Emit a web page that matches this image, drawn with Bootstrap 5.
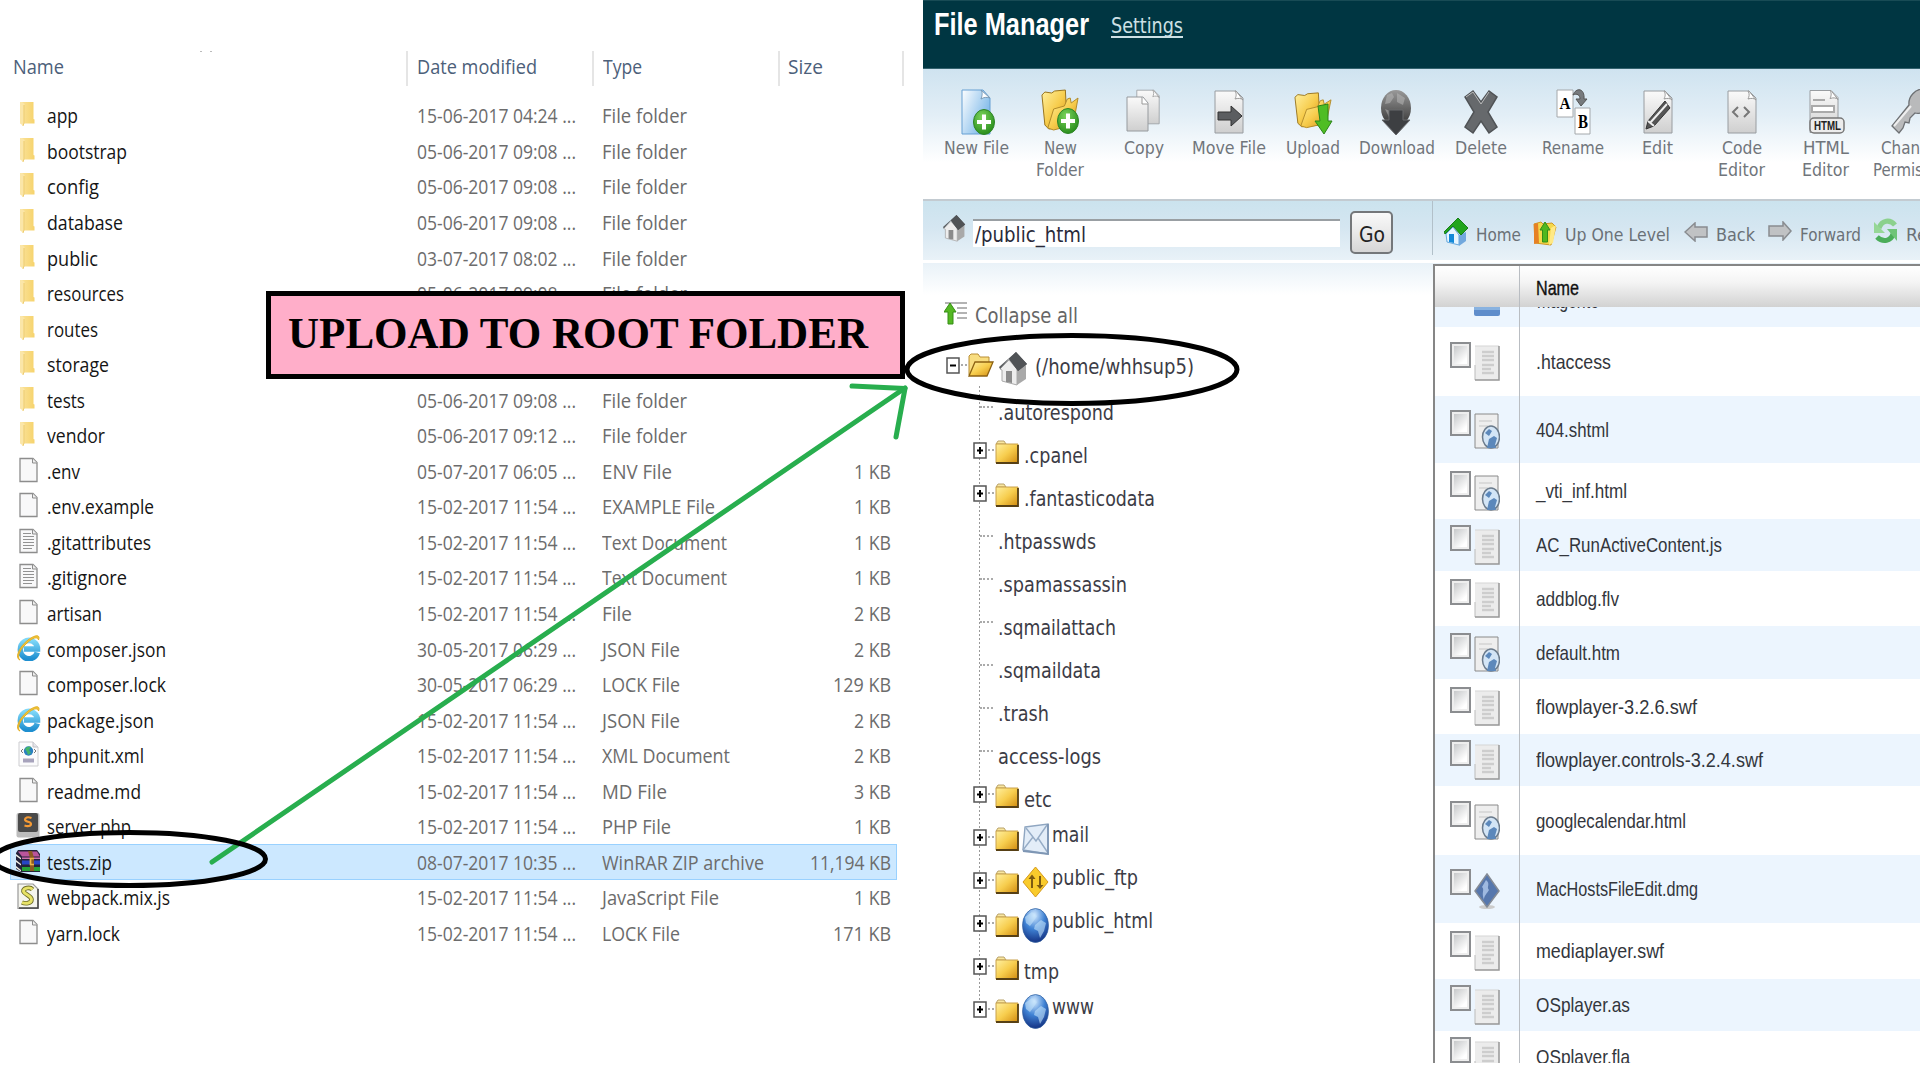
<!DOCTYPE html>
<html lang="en">
<head>
<meta charset="utf-8">
<title>Upload to root folder</title>
<link href="https://cdn.jsdelivr.net/npm/bootstrap@5.3.0/dist/css/bootstrap.min.css" rel="stylesheet">
<style>
body{width:1920px;height:1080px;overflow:hidden;background:#fff}
svg{display:block;flex:none}
[data-w]{display:inline-block;white-space:nowrap;transform-origin:0 50%}
/* explorer */
.explorer{width:923px;height:1080px;font:20px/24px "Open Sans","Noto Sans",sans-serif;color:#6c6c6c}
.ex-head{height:37px;margin-top:51px;color:#4c607a;line-height:31px}
.ex-head>div{border-right:2px solid #e5e5e5;height:35px}
.ex-list{padding-top:9.6px}
.ex-row{height:35.55px;margin-left:10px;width:887px;border:1px solid transparent}
.ex-row.picked{background:#cce8ff;border-color:#99d1ff}
.ex-icon{width:36px;padding-left:4px;padding-bottom:2px}
.ex-name{width:370px;color:#151515;padding-top:2px}
.ex-date{width:185px;padding-top:2px}.ex-type{width:150px;padding-top:2px}.ex-size{width:139px;padding-top:2px}
.sort-dots{height:1px;left:200px;top:51px;width:12px;border-left:2px solid #bbb;border-right:2px solid #bbb}
/* file manager */
.manager{width:997px;height:1063px;font-family:"DejaVu Sans Condensed","DejaVu Sans",sans-serif;color:#555}
.mg-top{height:69px;background:#003642;border-top:1px solid #184b55;border-bottom:1px solid #33626e}
.mg-title{font:bold 31px/36px "Liberation Sans",Arial,sans-serif;color:#fff;margin:6px 22px 0 11px}
.mg-settings{font-size:20.5px;line-height:28px;color:#cde0e5;margin-top:11px;text-decoration:underline;text-underline-offset:3px;text-decoration-skip-ink:none}
.mg-tools{height:130px;padding:19px 0 0 11px;background:linear-gradient(#cfe3f0,#e2eef6 35%,#fff 72%);font-size:18px;line-height:22px;color:#70757b}
.tool{width:84.2px;flex:none}
.tool svg{margin-bottom:1px}
.tool:last-child div+div{margin-left:14px}
.tool-sep{width:1px;height:68px;background:#b9c3ca;margin-right:8px}
.mg-bar{height:61px;border-top:2px solid #c3cbd1;background:linear-gradient(#cbe3ee,#d5e6f1 45%,#e9f2f8)}
.mg-path{width:510px;height:54px;border-right:1px solid #b2c0c9;padding-left:20px}
.mg-input{width:367px;height:28px;background:#fff;border-top:2px solid #999fa3;font-size:22px;line-height:28px;color:#2a2a3a;padding-left:2px;margin:9px 10px 0 7px}
.mg-go{width:43px;height:43px;border:2px solid #74777a;border-radius:5px;background:linear-gradient(#f9f9f9,#e9e9e9 50%,#d6d6d6);color:#222;font-size:22px;line-height:24px;padding:5px 0 0;margin-top:8px}
.mg-nav{font-size:18px;line-height:24px;color:#6a7177;padding:9px 0 0 11px;margin-top:7px}
.mg-nav span{flex:none;margin-top:6px}
.mg-main{height:803px;border-top:3px solid #fff;background:linear-gradient(#e9f2f8,#fff 32px)}
.mg-tree{width:510px;font-size:22px;line-height:28px;color:#3c3c46;padding-top:37px}
.tree-all{padding-left:21px;height:28px;color:#666}
.tree-root{padding-left:23px;height:52px;margin-top:11px}
.tree-list{padding-left:50px;background:repeating-linear-gradient(#999 0 2px,#fff0 2px 4px) 56px 0/1px 622px no-repeat;margin-top:-5px}
.tree-row{height:42.98px}
.dots{height:0;border-top:2px dotted #aaa}
.raised{margin-bottom:4px}.lowered{margin-top:12px}
.mg-files{width:487px;border:2px solid #868686;border-width:2px 0 0 2px;margin-top:1px;overflow:hidden;font:21px/26px "Liberation Sans",Arial,sans-serif;color:#33363c}
.file-head{height:41px;background:linear-gradient(#fff,#f4f4f4 40%,#d2d2d2);color:#111;-webkit-text-stroke:.4px #111}
.file-row{background:#fff}.file-row:nth-child(even){background:#ecf5fe}
.file-pick{width:85px;border-right:1.5px solid #b9bdc2;align-self:stretch;padding-left:15px}
.file-name{padding:0 0 0 16px}
.file-head .file-name{padding-top:2px}
.tick{width:21px;height:26px;border:2px solid #8b8d90;background:linear-gradient(135deg,#bdbfc1,#fff 75%);box-shadow:inset 0 0 0 2px #eee;margin:-14px 3px 0 0}
/* annotations */
.banner{left:266px;top:291px;width:639px;height:88px;border:5px solid #000;background:#ffaec9;z-index:3;color:#000;font:bold 44.5px/50px "Liberation Serif",serif;padding:11.5px 0 0 17px}
.marks{left:0;top:0;z-index:4;pointer-events:none}
</style>
<script src="https://cdn.jsdelivr.net/npm/bootstrap@5.3.0/dist/js/bootstrap.bundle.min.js"></script>
</head>
<body class="d-flex position-relative">
<svg width="0" height="0" class="position-absolute">
<defs>
<linearGradient id="gy" x1="0" y1="0" x2="1" y2="1"><stop offset="0" stop-color="#fff0a0"/><stop offset=".5" stop-color="#f7cd4d"/><stop offset="1" stop-color="#d18b10"/></linearGradient>
<linearGradient id="gp" x1="0" y1="0" x2="0" y2="1"><stop offset="0" stop-color="#fafafa"/><stop offset="1" stop-color="#cfcfcf"/></linearGradient>
<linearGradient id="gb" x1="0" y1="0" x2="1" y2=".6"><stop offset="0" stop-color="#fdfeff"/><stop offset="1" stop-color="#78b6e8"/></linearGradient>
<linearGradient id="gk" x1="0" y1="0" x2="0" y2="1"><stop offset="0" stop-color="#999"/><stop offset="1" stop-color="#333"/></linearGradient>
<linearGradient id="gf" x1="0" y1="0" x2="1" y2="0"><stop offset="0" stop-color="#fbe39c"/><stop offset="1" stop-color="#f6d36c"/></linearGradient>
<radialGradient id="gg" cx=".45" cy=".2" r=".9"><stop offset="0" stop-color="#d5ebff"/><stop offset=".45" stop-color="#3f82d4"/><stop offset="1" stop-color="#0a1f70"/></radialGradient>
<radialGradient id="gn" cx=".4" cy=".3" r=".7"><stop offset="0" stop-color="#7bd45c"/><stop offset="1" stop-color="#2b8f1d"/></radialGradient>
<linearGradient id="ge" x1="0" y1="0" x2="0" y2="1"><stop offset="0" stop-color="#7fd8f8"/><stop offset="1" stop-color="#1f8fd0"/></linearGradient>

<symbol id="e-folder" viewBox="0 0 26 26"><path d="M5 1h13.500v17l1 .5v4H5z" fill="url(#gf)"/><path d="M5 1h2l2.500 2v19l-1.500 3L5 22z" fill="#fbe6a8"/><path d="M9 4v18l-1 3" stroke="#eac45d" fill="none" stroke-width=".8"/></symbol>
<symbol id="e-file" viewBox="0 0 26 26"><path d="M5 1.500h13l4 4V24.500H5z" fill="#f8f8f9" stroke="#8d8d8d" stroke-width="1.300"/><path d="M17.500 1.500v4.500H22" fill="#eee" stroke="#8d8d8d"/></symbol>
<symbol id="e-text" viewBox="0 0 26 26"><use href="#e-file"/><path d="M8 5.500h8M8 8.500h11M8 11.500h11M8 14.500h11M8 17.500h11M8 20.500h9" stroke="#929292" stroke-width="1.100"/></symbol>
<symbol id="e-ie" viewBox="0 0 26 26"><path d="M22.300 17.500A8.700 9.200 0 1 1 22.500 12.500v1.500H9" fill="none" stroke="url(#ge)" stroke-width="5.500"/><path d="M5 25C-1 23 5 11 13 5C18 1 26-2 23.500 5C23 1 17 3 12 8C6 13 1 22 5 25z" fill="#f1c63a" stroke="#e3ae22" stroke-width="1"/></symbol>
<symbol id="e-xml" viewBox="0 0 26 26"><path d="M4 1h14l5 5v19H4z" fill="#fbfbfc" stroke="#cdcdd0"/><path d="M18 1v5h5" fill="#e5e5ea" stroke="#c2c2c8"/><circle cx="13.500" cy="10" r="4.700" fill="#2b80c0"/><path d="M10 8c2-3 5-3 6-2l-2 3 2 3-3 2-1-3z" fill="#44b569"/><path d="M8 8l-2 2 2 2M19 8l2 2-2 2" stroke="#777" fill="none"/><path d="M8 17.500h11v4H8z" fill="#a7a3bc"/></symbol>
<symbol id="e-php" viewBox="0 0 26 26"><rect x="1.500" y="1" width="23" height="24.500" rx="2" fill="#bcbcbc"/><rect x="3" y="1" width="20" height="19" rx="2" fill="#4a4a4a"/><path d="M16.500 6c-4-1.500-6.500-.5-6.500 1.500 0 3 6 1.500 6 4.500 0 2.300-3.500 2.500-6.500 1.500" fill="none" stroke="#f59a34" stroke-width="2.200"/></symbol>
<symbol id="e-rar" viewBox="0 0 26 26"><path d="M1 5l2-3h19l3 4v18H6L1 21z" fill="#24223a"/><path d="M3 3.500h19l3 5H7z" fill="#b9559b"/><path d="M7 9.500h18v1.500H7z" fill="#d06fb0"/><path d="M7 12.500h18v4H7z" fill="#2746c4"/><path d="M7 19h18v4H7z" fill="#26a136"/><path d="M1 6l5 4v1.500L1 8M1 12l5 4v1.500l-5-3.500M1 18l5 4v1.500l-5-3.500" fill="#f4f0e4"/><path d="M13 3h4l2 7v13h-4V10z" fill="#8b5a22"/><path d="M19 10.500h-3.500v6H19" fill="none" stroke="#e9b448" stroke-width="1.700"/></symbol>
<symbol id="e-js" viewBox="0 0 26 26"><path d="M3 1h15l5 5v19.500H3z" fill="#f5f5ee" stroke="#999" stroke-width="1.200"/><path d="M23 6v19H4" fill="none" stroke="#444" stroke-width="1.500"/><path d="M17.500 6.500C15 3.500 8 5 8.500 8.500c1 3 8 4 8 8 0 4-6 4.500-9.500 3" fill="none" stroke="#6d6c28" stroke-width="4.600"/><path d="M17.500 6.500C15 3.500 8 5 8.500 8.500c1 3 8 4 8 8 0 4-6 4.500-9.500 3" fill="none" stroke="#e7e267" stroke-width="2.900"/></symbol>

<symbol id="plus" viewBox="0 0 22 26"><ellipse cx="11" cy="13" rx="10.500" ry="12.500" fill="url(#gn)" stroke="#2d8425"/><path d="M11 5.500v15M4 13h14" stroke="#fff" stroke-width="4"/></symbol>
<symbol id="bigfolder" viewBox="0 0 40 46" preserveAspectRatio="none"><path d="M2 6l3-3 7 1 3-2 11-1 2 37-19 2-4-4z" fill="url(#gy)" stroke="#97731c"/><path d="M8 39l6-19 11-3 3-7 3-1 1 5 7-5-5 27-20 5z" fill="url(#gy)" stroke="#b18a29"/></symbol>
<symbol id="page" viewBox="0 0 30 44"><path d="M1 1h21l7 7v35H1z" fill="url(#gp)" stroke="#989ca0"/><path d="M21 1c2 3 1 6 0 8 3-1 6-1 8 1L22 1z" fill="#fff" stroke="#999"/></symbol>
<symbol id="t-newfile" viewBox="0 0 40 46"><path d="M6 1h21l7 8v36H6z" fill="url(#gb)" stroke="#67a0d3"/><path d="M25 1c2 3 1 6 0 9 3-2 6-2 9-1z" fill="#fff" stroke="#7a9ab6"/><use href="#plus" x="17" y="20" width="22" height="26"/></symbol>
<symbol id="t-newfolder" viewBox="0 0 40 46"><use href="#bigfolder" width="39" height="46"/><use href="#plus" x="17" y="19" width="22" height="26"/></symbol>
<symbol id="t-copy" viewBox="0 0 40 46"><use href="#page" x="12" y="0" width="24" height="36"/><path d="M3 8h16l5 6v28H3z" fill="url(#gp)" stroke="#969a9e"/><path d="M18 8v7h6" fill="#fff" stroke="#999"/></symbol>
<symbol id="t-move" viewBox="0 0 40 46"><use href="#page" x="5" y="1" width="30" height="44"/><path d="M9 23h13v-6l11 10-11 10v-6H9z" fill="#5b5d60" stroke="#333"/></symbol>
<symbol id="t-upload" viewBox="0 0 40 46"><use href="#bigfolder" y="3" width="39" height="40"/><path d="M25 17l10-2v17h4l-8 13-9-13h5z" fill="#4fbd24" stroke="#2c851a"/></symbol>
<symbol id="t-download" viewBox="0 0 40 46"><ellipse cx="19" cy="19" rx="15" ry="18" fill="url(#gk)"/><path d="M10 6l5-2 2 4-4 6-5 1zM20 4l8 5-2 7-6-3zM8 20l5 2-1 6z" fill="#b7b7b7" opacity=".55"/><path d="M12 21h14v10h7L19 46 5 31h7z" fill="#3d3f42" stroke="#686a6d"/></symbol>
<symbol id="t-delete" viewBox="0 0 40 46"><path d="M4 8l8-6 8 11 8-11 8 6-9 15 9 15-8 6-8-12-8 12-8-6 9-15z" fill="#66696c" stroke="#505356" stroke-width="1.500"/><path d="M5 8l7-5 8 12 8-12" stroke="#bbb" fill="none"/></symbol>
<symbol id="t-rename" viewBox="0 0 40 46"><path d="M4 1h16v27H4zM22 19h15v26H22z" fill="#fff" stroke="#a4a8ab"/><path d="M20 6c3-8 12-7 11 4h3l-6 7-5-7h4c0-4-3-6-7-4z" fill="#777a7d" stroke="#555"/><text x="6.500" y="20" font-family="Liberation Serif" font-weight="bold" font-size="17" textLength="11" lengthAdjust="spacingAndGlyphs">A</text><text x="25" y="39" font-family="Liberation Serif" font-weight="bold" font-size="19" textLength="10" lengthAdjust="spacingAndGlyphs">B</text></symbol>
<symbol id="t-edit" viewBox="0 0 40 46"><use href="#page" x="5" y="1" width="30" height="44"/><path d="M10 32L27 12l5 7-16 18-8 3z" fill="#555" stroke="#333"/><path d="M12 34L29 15M10 32l6 5" stroke="#eee" stroke-width="2"/></symbol>
<symbol id="t-code" viewBox="0 0 40 46"><use href="#page" x="5" y="1" width="30" height="44"/><path d="M16 18l-5 5 5 5M22 18l5 5-5 5" fill="none" stroke="#777" stroke-width="2"/></symbol>
<symbol id="t-html" viewBox="0 0 40 46"><use href="#page" x="3" y="0" width="30" height="45"/><path d="M7 11h12M6 17h22v6H6z" fill="#fff" stroke="#aaa" stroke-width="2"/><rect x="4" y="29" width="34" height="15" rx="4" fill="#ececec" stroke="#777" stroke-width="1.500"/><text x="8" y="41" font-family="Liberation Sans" font-weight="bold" font-size="12" fill="#222" textLength="27" lengthAdjust="spacingAndGlyphs">HTML</text></symbol>
<symbol id="t-key" viewBox="0 0 40 46"><path d="M2 37l17-21c-1-8 6-16 14-16 6 0 8 7 7 12-1 8-8 14-15 12l-5 5-1 5-4-1-2 6-4 5z" fill="#b9babb" stroke="#6e7174" stroke-width="1.300"/><path d="M4 37l17-20" stroke="#eee" stroke-width="2"/></symbol>

<symbol id="house" viewBox="0 0 29 34"><path d="M1 17L10 8l8 9v16L3 29V18z" fill="#ededed" stroke="#aaa"/><path d="M18 17l9-4v14l-9 6z" fill="#a9a9a9"/><path d="M17 0L28 12l-9 7L10 7 1 17l-1-2z" fill="#5a5d60"/><path d="M17 0L28 12l-9 7-9-12z" fill="#505356"/><path d="M7 19h6v12l-6-1z" fill="#8b8b8b"/></symbol>
<symbol id="home" viewBox="0 0 24 28"><path d="M2 16l7-7 6 8v10L3 24z" fill="#e7f5ff" stroke="#65a8dd"/><path d="M15 17l7-3v9l-7 5z" fill="#72a8dd"/><path d="M14 0l10 10-7 7-8-9-8 8-1-2z" fill="#21a51d" stroke="#197e18"/><path d="M5 16h5v9l-5-1z" fill="#1589d8"/></symbol>
<symbol id="up" viewBox="0 0 24 26"><path d="M1 4l7-2 2 2 9-1 4 4-5 18L2 23z" fill="#f5d84a" stroke="#d09624"/><path d="M1 4l4-1 1 20-5 1z" fill="#e68125"/><path d="M18 8l5-3-3 18-4 2z" fill="#ffe985"/><path d="M12 2l5 8h-2.500v12h-5V10H7z" fill="#50b71e" stroke="#328d18"/></symbol>
<symbol id="left" viewBox="0 0 24 20"><path d="M1 10L11 1v4h12v10H11v4z" fill="#c0c2c4" stroke="#898c90" stroke-width="1.500"/></symbol>
<symbol id="right" viewBox="0 0 24 20"><path d="M23 10L15 1v4H1v10h14v4z" fill="#c0c2c4" stroke="#898c90" stroke-width="1.500"/></symbol>
<symbol id="reload" viewBox="0 0 24 26"><path d="M5 10C8 2 16 1 21 7" fill="none" stroke="#8bd18d" stroke-width="5"/><path d="M0 4v11h11z" fill="#96d796"/><path d="M19 16c-2 7-10 9-16 3" fill="none" stroke="#4bad5a" stroke-width="5"/><path d="M23 23V11H13z" fill="#6fc478"/></symbol>
<symbol id="collapse" viewBox="0 0 24 24"><path d="M1 1h22M13 6h10M13 11h10M13 16h10" stroke="#9a9a9a" stroke-width="1.500"/><path d="M6 1l6 9H9v12H4V10H0z" fill="#54b823" stroke="#358d14"/></symbol>
<symbol id="folder" viewBox="0 0 24 24"><path d="M1 4l2-3h6l2 3z" fill="#f9e7a0" stroke="#b9a26a"/><path d="M1 4h22v19H1z" fill="url(#gy)" stroke="#c8a04a"/><path d="M1 23h22V5" fill="none" stroke="#574015" stroke-width="1.800"/></symbol>
<symbol id="openfolder" viewBox="0 0 26 24"><path d="M1 22V3l2-2h7l2 3h9v7" fill="#f8dd80" stroke="#b98e35"/><path d="M1 23L7 9h18l-6 14z" fill="url(#gy)" stroke="#8d6212" stroke-width="1.300"/></symbol>
<symbol id="mail" viewBox="0 0 27 32"><path d="M3 4l23-3v30L1 27z" fill="#e3edf8" stroke="#8fa6c1" stroke-width="1.400"/><path d="M4 5l10 13L25 2M1 27l10-13M26 30L16 15" fill="none" stroke="#96acc6" stroke-width="1.400"/><path d="M26 1v30L1 28" fill="none" stroke="#7e96b4" stroke-width="1.800"/></symbol>
<symbol id="ftp" viewBox="0 0 27 32"><path d="M13.500 1L26 16 13.500 31 1 16z" fill="#f9cb2c" stroke="#d59a1b"/><path d="M10 22V11M18 10v11" stroke="#7c5b12" stroke-width="2"/><path d="M6.500 13L10 8.500l3.500 4.500zM14.500 19l3.500 4 3.500-4z" fill="#7c5b12"/></symbol>
<symbol id="globe" viewBox="0 0 27 35"><ellipse cx="13.500" cy="17.500" rx="13" ry="17" fill="url(#gg)" stroke="#2e5f9f" stroke-width=".7"/><path d="M3 9l7-5 5 4-4 6-3 4-4-3zM13 17l6-5 5 3-2 8-4 7-2-7-4-2z" fill="#c3e2fa" opacity=".6"/></symbol>
<symbol id="f-doc" viewBox="0 0 26 36"><path d="M1 1h24v34H1z" fill="#ececec"/><path d="M1 1h24" stroke="#d5d5d5"/><path d="M1 20v15" stroke="#bbb"/><path d="M25 1v34H1" fill="none" stroke="#979797" stroke-width="1.500"/><path d="M8 7h12M8 11h12M8 15h12M8 20h12M8 24h9M8 28h12" stroke="#cdcdcd" stroke-width="2.500"/></symbol>
<symbol id="f-web" viewBox="0 0 26 36"><path d="M1 1h23v34H1z" fill="#eee" stroke="#8a8a8a"/><path d="M5 8h13M5 13h9" stroke="#dadada" stroke-width="2"/><ellipse cx="17" cy="24" rx="8.500" ry="11" fill="#d3e5f6" stroke="#6b7b8c" stroke-width="1.500"/><path d="M11 20l4-4 3 2-3 5zM15 26l5-3 3 2-2 7 1 3h-9z" fill="#5c88bb"/></symbol>
<symbol id="f-dmg" viewBox="0 0 26 36"><ellipse cx="13" cy="34" rx="8" ry="2" fill="#ccc"/><path d="M13 1l12 17-12 16L1 18z" fill="#5677ad" stroke="#858b95" stroke-width="1.500"/><path d="M12 7c5 4 0 7 3 10-2 4-5 5-5 10-3-8 1-10-2-13z" fill="#9fb9e0"/></symbol>
</defs></svg>

<section class="explorer flex-shrink-0 position-relative">
  <div class="sort-dots position-absolute"></div>
  <div class="ex-head d-flex">
    <div style="width:408px;padding-left:13px"><span data-w="51">Name</span></div>
    <div style="width:186px;padding-left:9px"><span data-w="120">Date modified</span></div>
    <div style="width:186px;padding-left:9px"><span data-w="39">Type</span></div>
    <div style="width:124px;padding-left:8px"><span data-w="35">Size</span></div>
  </div>
  <div class="ex-list" id="exList"></div>
</section>

<section class="manager overflow-hidden">
  <header class="mg-top d-flex align-items-start">
    <span class="mg-title" data-w="155">File Manager</span>
    <a class="mg-settings" data-w="72">Settings</a>
  </header>
  <div class="mg-tools d-flex overflow-hidden" id="tools"></div>
  <div class="mg-bar d-flex align-items-start overflow-hidden">
    <div class="mg-path d-flex align-items-center flex-shrink-0">
      <svg width="23" height="27"><use href="#house"/></svg>
      <div class="mg-input"><span data-w="111">/public_html</span></div>
      <button class="mg-go"><span data-w="26">Go</span></button>
    </div>
    <nav class="mg-nav d-flex align-items-center flex-fill">
      <svg width="24" height="28" class="me-2"><use href="#home"/></svg><span data-w="45">Home</span>
      <svg width="24" height="26" style="margin:1px 8px 0 12px"><use href="#up"/></svg><span data-w="105">Up One Level</span>
      <svg width="24" height="20" style="margin:0 8px 1px 14px"><use href="#left"/></svg><span data-w="39">Back</span>
      <svg width="24" height="20" style="margin:0 8px 3px 13px"><use href="#right"/></svg><span data-w="61">Forward</span>
      <svg width="24" height="26" style="margin:0 8px 2px 13px"><use href="#reload"/></svg><span data-w="58">Reload</span>
    </nav>
  </div>
  <div class="mg-main d-flex align-items-start overflow-hidden">
    <div class="mg-tree flex-shrink-0">
      <div class="tree-all d-flex align-items-center"><svg width="24" height="24"><use href="#collapse"/></svg><span style="margin:3px 0 0 7px" data-w="103">Collapse all</span></div>
      <div class="tree-root d-flex align-items-center">
        <svg width="14" height="17" viewBox="0 0 14 17"><path d="M1 1h12v15H1z" fill="#fff" stroke="#555" stroke-width="1.500"/><path d="M4 8.500h6" stroke="#000" stroke-width="2"/></svg>
        <div class="dots" style="width:6px;margin:0 1px"></div>
        <svg width="26" height="24"><use href="#openfolder"/></svg>
        <svg width="29" height="34" style="margin:8px 7px 0 5px"><use href="#house"/></svg>
        <span class="mt-1" data-w="159">(/home/whhsup5)</span>
      </div>
      <div class="tree-list" id="tree"></div>
    </div>
    <div class="mg-files flex-shrink-0">
      <div class="file-head d-flex align-items-center"><div class="file-pick"></div><div class="file-name"><span data-w="43">Name</span></div></div>
      <div id="files"></div>
    </div>
  </div>
</section>

<div class="banner position-absolute"><span data-w="580">UPLOAD TO ROOT FOLDER</span></div>
<svg class="marks position-absolute" width="1920" height="1080" fill="none">
  <g stroke="#28ae4e" stroke-width="5" stroke-linecap="round" stroke-linejoin="round"><path d="M212 862L905 388"/><path d="M852 386L905 388.500L896 437"/></g>
  <ellipse cx="129.500" cy="859" rx="136" ry="26.500" stroke="#000" stroke-width="5"/>
  <ellipse cx="1072" cy="369.500" rx="165" ry="34" stroke="#000" stroke-width="5"/>
</svg>

<script>
const d='05-06-2017 09:08 ...', f='15-02-2017 11:54 ...';
const tw={'File folder':85,'ENV File':70,'EXAMPLE File':113,'Text Document':125,'File':30,'JSON File':78,'LOCK File':78,'XML Document':128,'MD File':65,'PHP File':69,'WinRAR ZIP archive':162,'JavaScript File':117};
const sw={4:37,6:58,9:81};
const explorer=[
['folder','app',31,'15-06-2017 04:24 ...','File folder'],['folder','bootstrap',80,d,'File folder'],['folder','config',52,d,'File folder'],['folder','database',76,d,'File folder'],['folder','public',51,'03-07-2017 08:02 ...','File folder'],['folder','resources',77,d,'File folder'],['folder','routes',51,d,'File folder'],['folder','storage',62,d,'File folder'],['folder','tests',38,d,'File folder'],['folder','vendor',58,'05-06-2017 09:12 ...','File folder'],
['file','.env',33,'05-07-2017 06:05 ...','ENV File','1 KB'],['file','.env.example',107,f,'EXAMPLE File','1 KB'],['text','.gitattributes',104,f,'Text Document','1 KB'],['text','.gitignore',80,f,'Text Document','1 KB'],['file','artisan',55,f,'File','2 KB'],['ie','composer.json',119,'30-05-2017 06:29 ...','JSON File','2 KB'],['file','composer.lock',119,'30-05-2017 06:29 ...','LOCK File','129 KB'],['ie','package.json',107,f,'JSON File','2 KB'],['xml','phpunit.xml',97,f,'XML Document','2 KB'],['file','readme.md',94,f,'MD File','3 KB'],['php','server.php',84,f,'PHP File','1 KB'],['rar','tests.zip',65,'08-07-2017 10:35 ...','WinRAR ZIP archive','11,194 KB'],['js','webpack.mix.js',123,f,'JavaScript File','1 KB'],['file','yarn.lock',73,f,'LOCK File','171 KB']];
exList.innerHTML=explorer.map(([i,n,w,dt,t,s])=>`<div class="ex-row d-flex align-items-center${i=='rar'?' picked':''}"><div class="ex-icon"><svg width="26" height="26"><use href="#e-${i}"/></svg></div><div class="ex-name"><span data-w="${w}">${n}</span></div><div class="ex-date"><span data-w="159">${dt}</span></div><div class="ex-type"><span data-w="${tw[t]}">${t}</span></div><div class="ex-size text-end">${s?`<span data-w="${sw[s.length]}">${s}</span>`:''}</div></div>`).join('');

const toolItems=[['newfile',['New File',65]],['newfolder',['New',33],['Folder',48]],['copy',['Copy',40]],['move',['Move File',74]],['upload',['Upload',54]],['download',['Download',76]],['delete',['Delete',52]],0,['rename',['Rename',62]],['edit',['Edit',31]],['code',['Code',40],['Editor',47]],['html',['HTML',46],['Editor',47]],['key',['Change',58],['Permissions',88]]];
tools.innerHTML=toolItems.map(t=>t?`<div class="tool d-flex flex-column align-items-center"><svg width="40" height="48" viewBox="0 -1 40 48"><use href="#t-${t[0]}" width="40" height="46"/></svg>${t.slice(1).map(([l,w])=>`<div><span data-w="${w}">${l}</span></div>`).join('')}</div>`:'<div class="tool-sep"></div>').join('');

const treeItems=[['.autorespond',116],['.cpanel',64,1],['.fantasticodata',131,1],['.htpasswds',98],['.spamassassin',129],['.sqmailattach',118],['.sqmaildata',103],['.trash',51],['access-logs',103],['etc',28,1],['mail',37,'mail',32],['public_ftp',86,'ftp',32],['public_html',101,'globe',35],['tmp',35,1],['www',42,'globe',35]];
tree.innerHTML=treeItems.map(([n,w,k,h])=>k?`<div class="tree-row d-flex align-items-center"><svg width="14" height="17" viewBox="0 0 14 17"><path d="M1 1h12v15H1z" fill="#fff" stroke="#555" stroke-width="1.500"/><path d="M4 8.500h6M7 5v7" stroke="#000" stroke-width="2"/></svg><div class="dots" style="width:6px;margin:0 1px"></div><svg width="24" height="24" style="margin-top:3px"><use href="#folder"/></svg>${h?`<svg width="27" height="${h}" style="margin:4px 3px 0 3px"><use href="#${k}"/></svg><span class="raised" data-w="${w}">${n}</span>`:`<span class="lowered" style="margin-left:5px" data-w="${w}">${n}</span>`}</div>`:`<div class="tree-row d-flex align-items-center"><div class="dots" style="width:13px;margin:0 5px 0 7px"></div><span class="lowered" data-w="${w}">${n}</span></div>`).join('');

const fileItems=[[69,'.htaccess',75,'doc'],[67,'404.shtml',73,'web'],[56,'_vti_inf.html',91,'web'],[52,'AC_RunActiveContent.js',186,'doc'],[55,'addblog.flv',83,'doc'],[53,'default.htm',84,'web'],[55,'flowplayer-3.2.6.swf',161,'doc'],[52,'flowplayer.controls-3.2.4.swf',227,'doc'],[69,'googlecalendar.html',150,'web'],[68,'MacHostsFileEdit.dmg',162,'dmg'],[56,'mediaplayer.swf',128,'doc'],[52,'OSplayer.as',94,'doc'],[52,'OSplayer.fla',94,'doc']];
files.innerHTML='<div></div><div class="file-row d-flex overflow-hidden" style="height:20px"><div class="file-pick"><svg width="26" height="10" style="margin-left:24px"><path d="M0 0h26v7q0 2-2 2H2q-2 0-2-2z" fill="#5f8dcb"/><path d="M0 0h26v3H0z" fill="#88b2e0"/></svg></div><div style="padding-left:17px;margin-top:-17px;line-height:22px"><span data-w="62">magento</span></div></div>'+fileItems.map(([h,n,w,i])=>`<div class="file-row d-flex align-items-center" style="height:${h}px"><div class="file-pick d-flex align-items-center"><div class="tick"></div><svg width="26" height="36" style="margin-top:3px"><use href="#f-${i}"/></svg></div><div class="file-name"><span data-w="${w}">${n}</span></div></div>`).join('');

document.querySelectorAll('[data-w]').forEach(e=>{const n=e.getBoundingClientRect().width,w=+e.dataset.w;e.style.transform=`scaleX(${w/n})`;const m=parseFloat(getComputedStyle(e).marginRight)||0;e.style.marginRight=(m+w-n)+'px'});
</script>
</body>
</html>
